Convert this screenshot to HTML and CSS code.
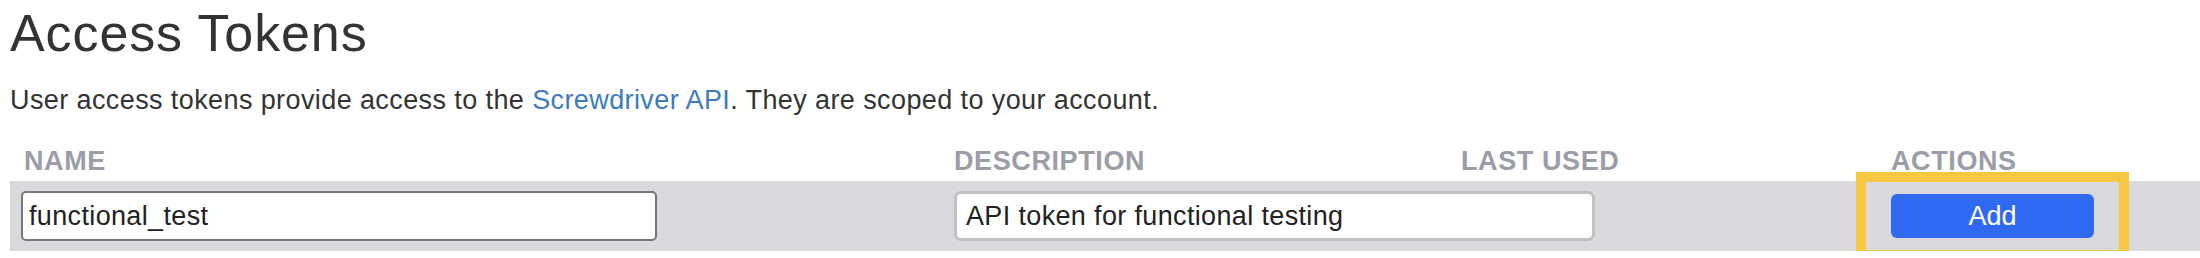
FILE: index.html
```html
<!DOCTYPE html>
<html lang="en">
<head>
<meta charset="utf-8">
<title>Access Tokens</title>
<link rel="stylesheet" href="styles.css">
</head>
<body>
<main class="page">
  <h1 class="title">Access Tokens</h1>
  <p class="intro">User access tokens provide access to the <a class="link" href="#">Screwdriver API</a>. They are scoped to your account.</p>
  <div class="table">
    <div class="row head">
      <div class="cell th th-name">NAME</div>
      <div class="cell th">DESCRIPTION</div>
      <div class="cell th">LAST USED</div>
      <div class="cell th th-actions">ACTIONS</div>
    </div>
    <div class="row body">
      <div class="cell"><input class="field field-name" type="text" value="functional_test"></div>
      <div class="cell"><input class="field field-desc" type="text" value="API token for functional testing"></div>
      <div class="cell"></div>
      <div class="cell actions">
        <span class="highlight-wrap">
          <button class="btn-add" type="button">Add</button>
          <span class="highlight"></span>
        </span>
      </div>
    </div>
  </div>
</main>
</body>
</html>
```

FILE: styles.css
```css
* { box-sizing: border-box; }

html, body {
  margin: 0;
  padding: 0;
  background: #ffffff;
  overflow: hidden;
}

body {
  font-family: "Liberation Sans", Arial, Helvetica, sans-serif;
  color: #333333;
}

.page {
  padding: 3px 0 0 10px;
}

.title {
  margin: 0;
  font-size: 52px;
  line-height: 60px;
  letter-spacing: 0.9px;
  font-weight: 400;
  color: #333333;
}

.intro {
  margin: 19px 0 0 0;
  font-size: 27px;
  line-height: 36px;
  letter-spacing: 0.4px;
  color: #333333;
}

.link {
  color: #3b7bc0;
  text-decoration: none;
}

.table {
  margin-top: 28px;
}

.row {
  display: grid;
  grid-template-columns: 933px 507px 430px 1fr;
}

.cell {
  padding: 0 11px;
}

.head {
  padding-bottom: 5px;
}

.th {
  font-size: 27px;
  line-height: 30px;
  letter-spacing: 0.6px;
  font-weight: 700;
  color: #9b9da7;
}

.th-name { padding-left: 14px; }
.th-actions { padding-left: 11px; }

.body {
  background: #d9dadd;
  padding: 10px 0;
  align-items: center;
}

.field {
  display: block;
  height: 50px;
  margin: 0;
  font-family: "Liberation Sans", Arial, Helvetica, sans-serif;
  font-size: 27px;
  letter-spacing: 0.35px;
  color: #222222;
  background: #ffffff;
  outline: none;
}

.field-name {
  width: 636px;
  border: 2px solid #777777;
  border-radius: 5px;
  padding: 0 6px;
}

.field-desc {
  width: 641px;
  border: 3px solid #c2c2c4;
  border-radius: 7px;
  padding: 0 9px;
}

.actions {
  display: flex;
  align-items: center;
}

.highlight-wrap {
  position: relative;
  display: inline-block;
}

.btn-add {
  display: block;
  width: 203px;
  height: 44px;
  margin: 0;
  border: 0;
  border-radius: 6px;
  background: #306af2;
  color: #ffffff;
  font-family: "Liberation Sans", Arial, Helvetica, sans-serif;
  font-size: 27px;
  line-height: 44px;
  padding: 0;
  text-align: center;
}

.highlight {
  position: absolute;
  top: -22px;
  bottom: -22px;
  left: -35px;
  right: -35px;
  border: 10px solid #f5c842;
  pointer-events: none;
}
```
